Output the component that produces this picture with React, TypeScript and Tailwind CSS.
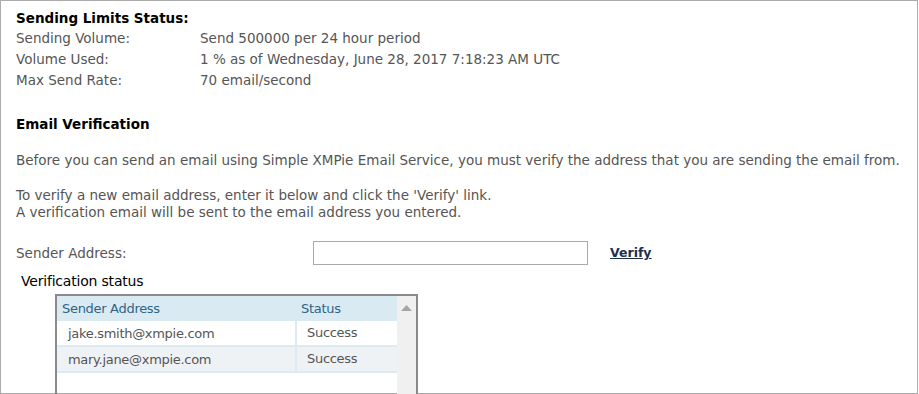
import React from "react";

const limits = [
  { label: "Sending Volume:", value: "Send 500000 per 24 hour period" },
  { label: "Volume Used:", value: "1 % as of Wednesday, June 28, 2017 7:18:23 AM UTC" },
  { label: "Max Send Rate:", value: "70 email/second" },
];

const addresses = [
  { email: "jake.smith@xmpie.com", status: "Success" },
  { email: "mary.jane@xmpie.com", status: "Success" },
];

export default function App() {
  return (
    <div className="h-[394px] w-[919px] overflow-hidden bg-white">
      <div className="h-[394px] w-[918px] border border-[#ababab] pl-[15px] pt-[8px] font-['DejaVu_Sans',sans-serif] text-[13.5px] text-[#555]">
        <h2 className="h-[19px] font-bold leading-[19px] text-black">Sending Limits Status:</h2>
        <div className="flex flex-col">
          {limits.map((row) => (
            <div key={row.label} className="flex h-[21px] items-center">
              <span className="w-[184px]">{row.label}</span>
              <span>{row.value}</span>
            </div>
          ))}
        </div>

        <h2 className="mt-[23px] h-[20px] font-bold leading-[20px] text-black">Email Verification</h2>

        <p className="mt-[18px] leading-[17px]">
          Before you can send an email using Simple XMPie Email Service, you must verify the address that you are sending the email from.
        </p>
        <p className="mt-[18px] leading-[17px]">
          To verify a new email address, enter it below and click the 'Verify' link.
          <br />
          A verification email will be sent to the email address you entered.
        </p>

        <div className="mt-[20px] flex items-center">
          <span className="w-[297px]">Sender Address:</span>
          <input className="h-[24px] w-[275px] border border-[#aaa] bg-white px-1 outline-none" />
          <a href="#" className="ml-[22px] text-[12.5px] font-bold text-[#1e2f4d] underline">
            Verify
          </a>
        </div>

        <div className="mt-[6px] ml-[5px] text-[14px] leading-[20px] tracking-[-0.2px] text-black">
          Verification status
        </div>

        <div className="mt-[3px] ml-[39px] flex h-[120px] w-[363px] border-2 border-[#8a8a8a] text-[13px] tracking-[-0.3px]">
          <div className="flex flex-1 flex-col">
            <div className="flex h-[25px] items-center bg-[#daeaf2] text-[#2f6487]">
              <span className="w-[240px] pl-[5px]">Sender Address</span>
              <span className="pl-[4px]">Status</span>
            </div>
            {addresses.map((a, i) => (
              <div
                key={a.email}
                className={`flex h-[26px] items-center border-b-2 border-[#dcebf3] ${i % 2 ? "bg-[#eff2f5]" : "bg-white"}`}
              >
                <span className="h-full w-[240px] border-r-2 border-[#dcebf3] pl-[11px] leading-[25px]">{a.email}</span>
                <span className="pl-[10px]">{a.status}</span>
              </div>
            ))}
          </div>
          <div className="flex w-[19px] justify-center bg-[#f0f0f0] pt-[9px]">
            <svg width="11" height="6" viewBox="0 0 11 6">
              <path d="M0 6 L5.5 0 L11 6 Z" fill="#a6a6a6" />
            </svg>
          </div>
        </div>
      </div>
    </div>
  );
}
